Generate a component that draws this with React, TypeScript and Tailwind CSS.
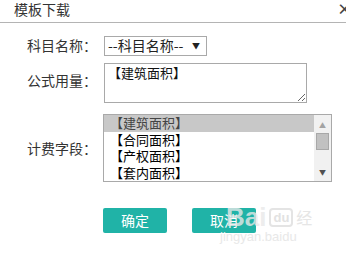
const items = ["【建筑面积】", "【合同面积】", "【产权面积】", "【套内面积】"];

export default function App() {
  return (
    <div className="relative w-[346px] h-[259px] overflow-hidden bg-white text-[#333] font-['Noto_Sans_CJK_SC',sans-serif]">
      {/* header */}
      <div className="flex h-[23px] items-center justify-between border-b border-[#b4b4b4] pl-[14px] pb-[4px]">
        <span className="text-[14px] leading-[18px]">模板下载</span>
        <span className="mr-[-6px] text-[15px] font-bold leading-[16px] text-[#444]">×</span>
      </div>

      <div className="flex flex-col pl-[27px] pt-[12px]">
        <div className="flex items-center">
          <label className="w-[77px] text-[14px]">科目名称：</label>
          <div className="flex h-[20px] w-[103px] items-center justify-between border border-[#a9a9a9] pl-[3px] pr-[6px] text-[14px] text-[#222]">
            <span>--科目名称--</span>
            <span className="text-[8px]">▼</span>
          </div>
        </div>

        <div className="mt-[7px] flex items-center">
          <label className="w-[77px] pb-[5px] text-[14px]">公式用量：</label>
          <textarea
            readOnly
            defaultValue="【建筑面积】"
            className="h-[40px] w-[203px] border border-[#a9a9a9] px-[3px] py-0 text-[13px] leading-[17px] text-[#111] outline-none"
          />
        </div>

        <div className="mt-[11px] flex items-center">
          <label className="w-[76px] text-[14px]">计费字段：</label>
          <div className="flex h-[68px] w-[229px] border border-[#a9a9a9]">
            <div className="flex flex-1 flex-col overflow-hidden">
              {items.map((t, i) => (
                <div
                  key={t}
                  className={
                    i === 0
                      ? "h-[16.5px] shrink-0 bg-[#c8c8c8] pl-[6px] text-[13px] leading-[16px] text-[#444]"
                      : "h-[16.5px] shrink-0 pl-[6px] text-[13px] leading-[16px] text-[#000]"
                  }
                >
                  {t}
                </div>
              ))}
            </div>
            <div className="relative flex w-[17px] flex-col items-center bg-[#f1f1f1]">
              <span className="mt-[6px] text-[7px] leading-[8px] text-[#a3a3a3]">▲</span>
              <div className="mt-[4px] h-[17px] w-[13px] border border-[#a8a8a8] bg-[#c1c1c1]" />
              <span className="mt-auto mb-[5px] text-[7px] leading-[8px] text-[#505050]">▼</span>
            </div>
          </div>
        </div>

        <div className="mt-[26px] flex gap-[25px] pl-[76px]">
          <button className="h-[25px] w-[64px] rounded-[2px] bg-[#20b3a7] text-[14px] text-white">确定</button>
          <button className="h-[25px] w-[64px] rounded-[2px] bg-[#20b3a7] text-[14px] text-white">取消</button>
        </div>
      </div>

      {/* watermark */}
      <div className="pointer-events-none absolute left-[226px] top-[204px] flex flex-col">
        <div className="flex items-center">
          <span className="font-['Liberation_Sans',sans-serif] text-[26px] font-bold leading-[26px] text-[#e8e8e8]/80">Bai</span>
          <span className="ml-[3px] rounded-[4px] border-2 border-[#e4e4e4] px-[2px] font-['Liberation_Sans',sans-serif] text-[13px] font-bold leading-[15px] text-[#e2e2e2]">du</span>
          <span className="ml-[3px] text-[16px] text-[#e6e6e6]">经</span>
        </div>
        <span className="-ml-[6px] font-['Liberation_Sans',sans-serif] text-[13px] leading-[14px] text-[#e8e8e8]">jingyan.baidu</span>
      </div>
    </div>
  );
}
